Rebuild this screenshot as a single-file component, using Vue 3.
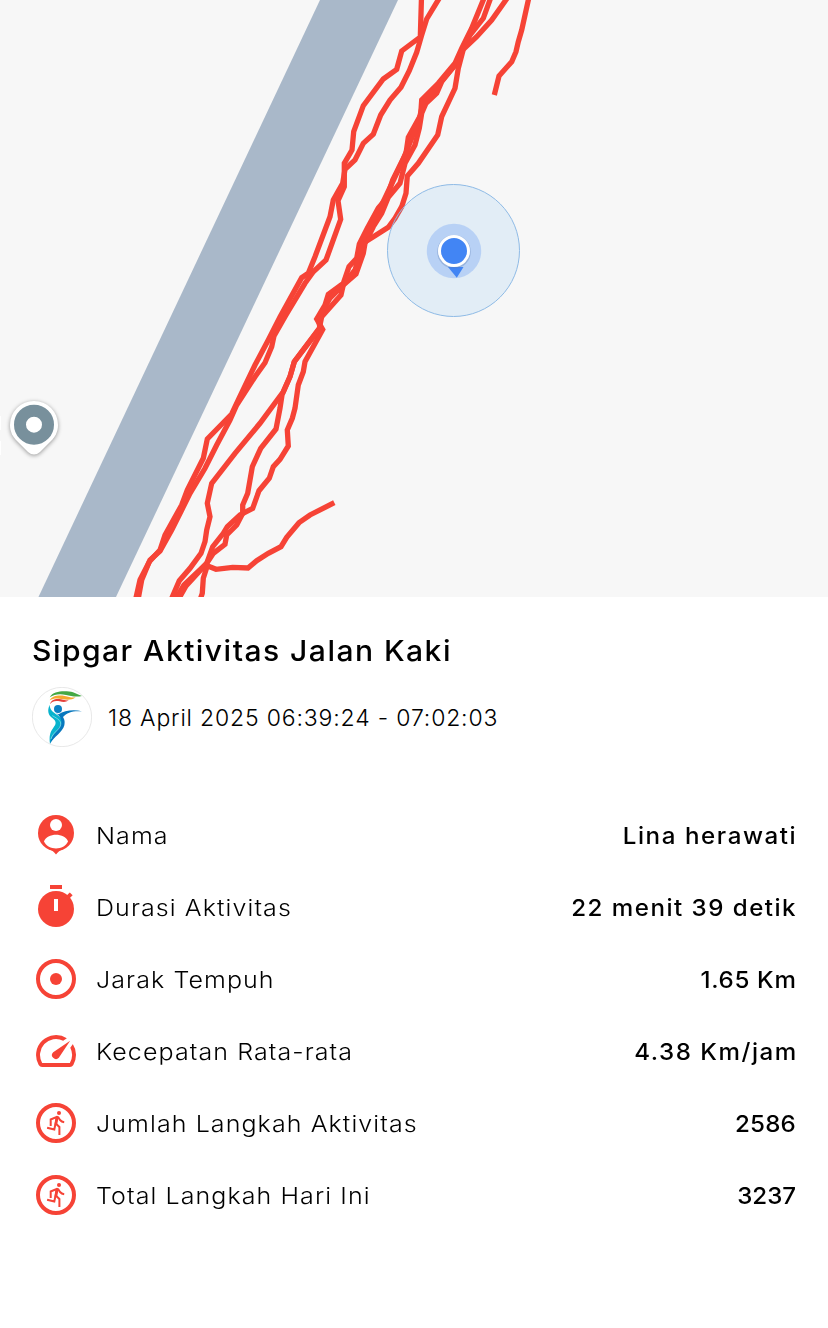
<template>
  <div class="activity">
    <svg class="map" viewBox="0 0 828 597" width="828" height="597">
      <rect width="828" height="597" fill="#f7f7f7" />
      <polygon points="320,0 398,0 115.5,598 38,598" fill="#a9b8c9" />
      <polyline v-for="(track, i) in tracks" :key="i" :points="track" class="track" />

      <!-- current position -->
      <circle cx="453.5" cy="250.5" r="66" fill="#4ba3f0" fill-opacity="0.12" stroke="#8fbbe6" />
      <circle cx="454" cy="251" r="27.2" fill="#4285f4" fill-opacity="0.26" />
      <path d="M448 267h15.500l-6.700 10.800z" fill="#4285f4" />
      <circle cx="454" cy="251.800" r="16.800" fill="#5b7fb5" fill-opacity="0.35" />
      <circle cx="454" cy="251" r="14.500" fill="#4285f4" stroke="#fff" stroke-width="3" />

      <!-- place marker -->
      <rect x="0" y="416" width="1" height="14" fill="#fff" />
      <rect x="0" y="441" width="1" height="14" fill="#fff" />
      <path class="marker" d="M34 401a24 24 0 0 1 24 24c0 7-3 12-7 16l-11 11q-6 5-12 0l-11-11c-4-4-7-9-7-16a24 24 0 0 1 24-24z" />
      <circle cx="34" cy="424.700" r="14" fill="none" stroke="#78909c" stroke-width="12" />
    </svg>

    <div class="content">
      <h1>Sipgar Aktivitas Jalan Kaki</h1>
      <div class="meta">
        <svg class="avatar" viewBox="36 21 180 180" width="60" height="60">
          <circle cx="126" cy="111" r="89" fill="#fff" stroke="#ddd" stroke-width="2" />
          <path d="M89 52C98 36 119 33 140 34c20 1 30 8 46 14-18 4-34 0-48-3-19-4-35-2-49 7z" fill="#45a844" />
          <path d="M89 61c8-14 27-16 45-13 14 3 20 6 33 4-11 9-26 8-39 6-16-4-28-3-39 3z" fill="#f5a92f" />
          <path d="M90 72c3-13 18-18 33-14 9 2 15 4 23 3-9 7-18 5-27 3-12-3-22-1-29 8z" fill="#e5403a" />
          <circle cx="114" cy="87" r="12" fill="#0b80c4" />
          <path d="M89 74c-8 18-5 31 9 41 12 9 11 18 2 28-10 13-13 26-10 48 8-20 33-36 40-53 6-15-7-25-17-32-16-11-24-18-24-32z" fill="#08b3cd" />
          <path d="M186 94c-24-7-53-3-70 9l-8-3c7 6 13 9 15 19 4 12-1 20-10 31-12 15-20 22-23 41 12-20 38-35 43-55 3-14-1-19-4-25 12-14 29-19 57-17z" fill="#0878be" />
          <path d="M97 107c18 10 29 17 24 31-4 12-23 20-28 39" fill="none" stroke="#d9f3fa" stroke-width="1.500" />
        </svg>
        <span class="date">18 April 2025 06:39:24 - 07:02:03</span>
      </div>

      <ul class="stats">
        <li v-for="row in rows" :key="row.label">
          <svg class="icon" viewBox="0 0 48 48" width="48" height="48">
            <template v-if="row.icon === 'person'">
              <circle cx="24" cy="22" r="18" />
              <path d="M17 38h14c-3 1-5 3-7 5.500-2-2.500-4-4.500-7-5.500z" />
              <circle cx="24" cy="14" r="6" fill="#fff" />
              <path d="M12 30.500c1-4.200 7-6.700 12-6.700s11 2.500 12 6.700c-2 4.500-7 6.900-12 6.900s-10-2.400-12-6.900z" fill="#fff" />
            </template>
            <template v-else-if="row.icon === 'timer'">
              <path d="M18 2h12v4H18z" />
              <circle cx="24" cy="26" r="18" />
              <path d="M34.500 15.500l4.700-4.700" class="line" />
              <path d="M22 16h4v12h-4z" fill="#fff" />
            </template>
            <template v-else-if="row.icon === 'distance'">
              <circle cx="24" cy="24" r="18" class="line" />
              <circle cx="24" cy="24" r="6" />
            </template>
            <template v-else-if="row.icon === 'speed'">
              <g transform="scale(2)">
                <path d="M20.380 8.570l-1.230 1.850a8 8 0 0 1-.22 7.580H5.070A8 8 0 0 1 15.580 6.850l1.850-1.230A10 10 0 0 0 3.350 19a2 2 0 0 0 1.720 1h13.850a2 2 0 0 0 1.740-1 10 10 0 0 0-.27-10.440z" />
                <path d="M10.590 15.410a2 2 0 0 0 2.830 0l5.660-8.490-8.490 5.660a2 2 0 0 0 0 2.830z" />
              </g>
            </template>
            <template v-else>
              <circle cx="24" cy="24" r="18" class="line" />
              <circle cx="27" cy="14" r="2" />
              <path d="M18.700 27v-6.500l6.300-2.700 1.300.5 1.700 2.700q1.600 1.800 4.200 2.200" class="limb" />
              <path d="M24.800 18.500l-2.500 12-7.200-1.700M24 24.700l3.400 3.300v8" class="limb" />
              <path d="M23.500 18l3.200.3-1.500 7-2.700.7z" />
            </template>
          </svg>
          <span class="label">{{ row.label }}</span>
          <span class="value" :style="{ letterSpacing: row.spacing + 'px', marginRight: -row.spacing + 'px' }">{{ row.value }}</span>
        </li>
      </ul>
    </div>
  </div>
</template>

<script setup>
const rows = [
  { icon: 'person', label: 'Nama', value: 'Lina herawati', spacing: 1.5 },
  { icon: 'timer', label: 'Durasi Aktivitas', value: '22 menit 39 detik', spacing: 1.4 },
  { icon: 'distance', label: 'Jarak Tempuh', value: '1.65 Km', spacing: 0.65 },
  { icon: 'speed', label: 'Kecepatan Rata-rata', value: '4.38 Km/jam', spacing: 1.45 },
  { icon: 'run', label: 'Jumlah Langkah Aktivitas', value: '2586', spacing: 0.1 },
  { icon: 'run', label: 'Total Langkah Hari Ini', value: '3237', spacing: 0 }
]

const tracks = [
  '421.500,-3 420.300,37 401.700,51 396.700,69.300 383.300,79 363.300,105.700 353.700,131.700 352,150 344.300,163.300 344.300,186.700 338,200.700 340.700,219.300 326,260 313.300,271.700 305,283.300 286,315 274,336 271.700,346.700 265,362.700 255,376.700 236.700,405 230,420 216.700,445 205,468.300 190,493.300 181.700,510 171.700,530 160,551 150,560 141.700,580 138,600',
  '440,-3 426.700,19 421.700,35 416.700,52.300 409.300,70.700 401,87.300 390,100 380.700,115 373.300,134.300 363.300,143.300 355,160 345,169.300 342.700,183.300 333.300,200 330,216.700 315,256.700 308.300,273.300 301.700,277.700 280,317 268.300,340 255,365 238.300,400 231.700,414 207.300,439 203.300,458.300 187.300,490 181.700,505 165,535 160,550 149.300,561.700 140,580 135.500,600',
  '484.500,-3 471.700,28.300 461.700,48.300 455,63.300 438.300,83.300 421.700,100 420.700,115 408.300,137.300 406,153.300 392.700,180 386.700,198.300 378.300,208 367.300,228.300 359.300,244 356.700,258.300 349,266.700 343.300,283.300 328.300,294.300 325,305 316.700,319 322.700,329.500 305,361.700 303.300,371.700 298.300,385 295,408.300 292.300,418.300 287.300,430 288.300,446 280,459.300 273.300,466.700 269.300,478.300 259,490.700 252.700,508.300 240,515 227.300,526.700 223.300,533.300 212.700,546.700 206.700,563.300 184,585 175,600',
  '491,-3 483.300,18.300 470,35 462.700,50 455,65 441.700,81.700 436.700,93.300 426,103.300 421.700,113.300 419.300,128.300 415,145 405,163.300 400,183.300 388.300,197.300 381.700,213.300 373.300,226.700 365,243.300 363.300,253.300 356,274 343.300,285 341,295 321.700,316.700 319.300,328.300 294.300,361.700 290,376.700 282,395 280,408.300 276,429 260.700,448.300 252.300,466.700 247.700,493.300 242.700,505 242.700,513.300 236.700,525 226.700,535 225,544.300 213.300,553.300 206.700,563.300 186,586 178,600',
  '508,-3 491.700,20 476.700,36.700 463.300,49.300 458.300,68.300 455,88.300 441.700,116.700 437.700,135 418.300,163.300 407.300,176 406,193.300 401.700,206.700 395,218.300 388.300,227.300 375,235.700 363,243.300 355,270 343.300,285 330,298 318.500,319 320,328 294.300,361.700 290,376.700 283.300,391.700 260,423.300 235,453.300 211.700,483.300 207.300,503.300 210,516.700 206.700,530 205,541.700 201,553.300 190,568.300 179.300,580.700 171,600',
  '455,65 423,103 419,120 403,160 386,196 372,225 362,240',
  '529,-3 521.700,30 518.300,41.700 516,51.700 511.700,61.700 499,76 494.300,95',
  '334.300,502.700 310,515 299,522.700 286.700,537.300 281,546.700 268.300,553.300 256.700,560.700 248,568 232.700,567.300 216,569.300 207.300,565.700 203.300,578.300 202.300,593.300 200,600'
]
</script>

<style>
body { background: #fff; }
</style>

<style scoped>
.activity {
  width: 828px;
  height: 1328px;
  overflow: hidden;
  background: #fff;
  color: #000;
  font-family: Inter, "Liberation Sans", sans-serif;
}
.map { display: block; }
.track { fill: none; stroke: #f64336; stroke-width: 5.3; }
.marker { fill: #fff; filter: drop-shadow(0 1px 2px rgba(0, 0, 0, 0.4)); }
.content { padding: 34px 32px 0; }
h1 {
  margin: 0;
  font-size: 29px;
  font-weight: 550;
  line-height: 40px;
  letter-spacing: 1.4px;
  white-space: nowrap;
  transform: scaleX(1.037);
  transform-origin: left;
}
.meta { display: flex; align-items: center; gap: 16px; margin-top: 16px; }
.avatar { display: block; }
.date { padding-top: 2px; font-size: 23px; font-weight: 300; letter-spacing: 0.83px; }
.stats { list-style: none; margin: 52px 0 0; padding: 0; }
.stats li { display: flex; align-items: center; height: 72px; font-size: 23px; white-space: nowrap; }
.icon { flex: none; margin-right: 16px; fill: #f64336; }
.line { fill: none; stroke: #f64336; stroke-width: 4; }
.limb { fill: none; stroke: #f64336; stroke-width: 2; }
.label {
  flex: 1;
  padding-top: 2px;
  font-weight: 300;
  letter-spacing: 1px;
  transform: scaleX(1.087);
  transform-origin: left;
}
.value {
  padding-top: 2px;
  font-weight: 550;
  transform: scaleX(1.05);
  transform-origin: right;
}
</style>
